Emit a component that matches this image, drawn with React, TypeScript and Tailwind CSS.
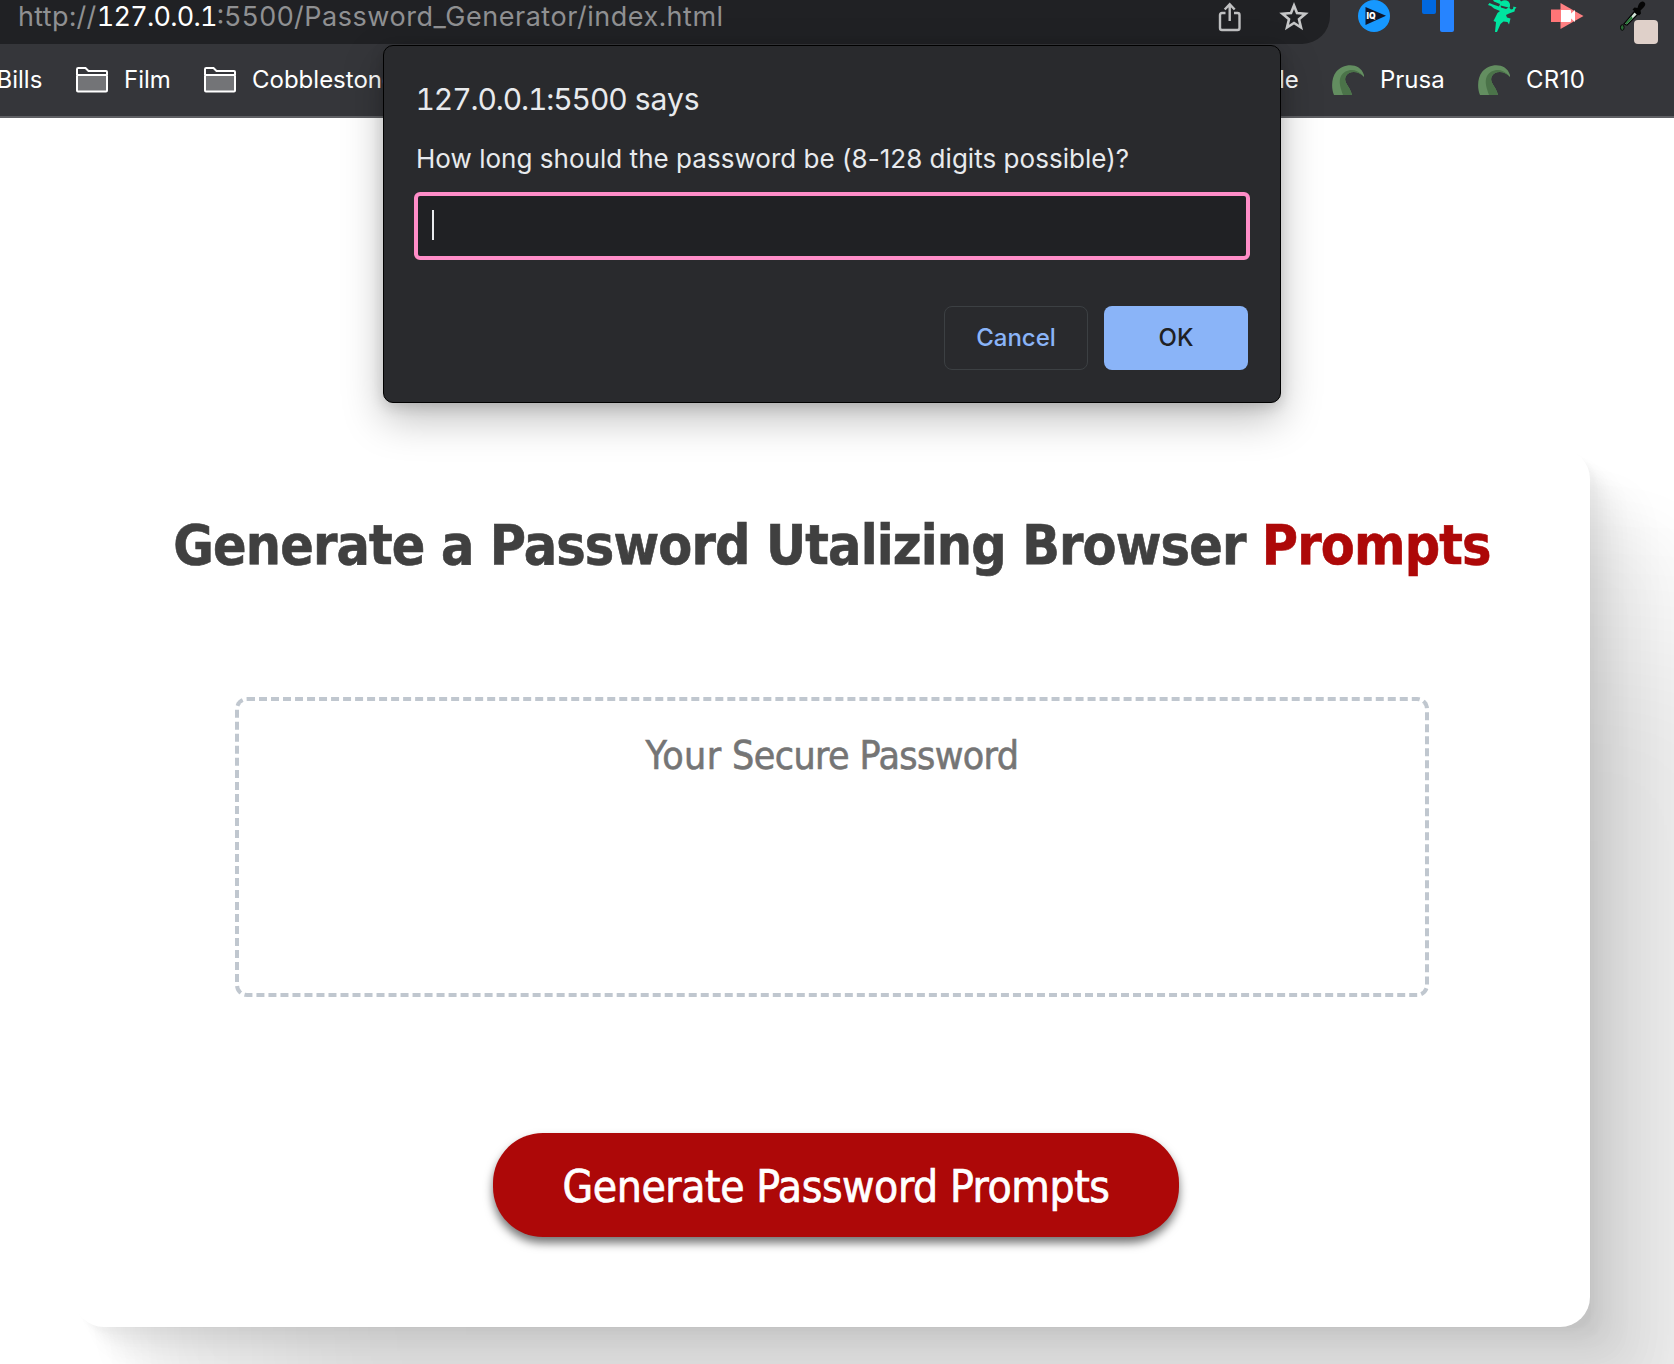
function FolderIcon() {
  return (
    <svg width="32" height="26" viewBox="0 0 32 26" fill="none" className="shrink-0">
      <path d="M1 8V2.2Q1 1 2.200 1H9.500L12.500 4H30Q31 4 31 5V8" stroke="#fff" strokeWidth="2" />
      <rect x="1" y="8" width="30" height="16.500" rx="1" fill="#737477" stroke="#fff" strokeWidth="2" />
    </svg>
  );
}

function TentacleIcon() {
  return (
    <svg width="32" height="30" viewBox="0 0 32 30" className="shrink-0">
      <path d="M2 30C-1 23 -.5 13 4 7C11-2 28-3 32 10V12C26 5 16 6 13.500 12C11.500 18 18 21 20 30Z" fill="#638e60" />
      <path d="M11 30C9 24 6 17 9 11C13 4 24 2 31 11C25 5 16 6 13.500 12C11.500 18 18 21 20 30Z" fill="#4b7349" />
    </svg>
  );
}

function ShareIcon() {
  return (
    <svg width="24" height="30" viewBox="0 0 24 30" fill="none" stroke="#c0c1c2" strokeWidth="2.400" className="shrink-0">
      <path d="M7.500 11H4Q2 11 2 13V26Q2 28 4 28H19.500Q21.500 28 21.500 26V13Q21.500 11 19.500 11H16" />
      <path d="M11.700 19V2.500M6.700 7.500L11.700 2.300L16.700 7.500" />
    </svg>
  );
}

function StarIcon() {
  return (
    <svg width="30" height="29" viewBox="0 0 30 29" className="shrink-0">
      <path
        d="M15 3.500L18 11L26.500 11.700L20 17.200L22 25.500L15 21L8 25.500L10 17.200L3.500 11.700L12 11Z"
        fill="none" stroke="#c6c7c8" strokeWidth="2.600"
      />
    </svg>
  );
}

function IqIcon() {
  return (
    <svg width="32" height="32" viewBox="0 0 32 32" className="shrink-0">
      <circle cx="16" cy="16" r="16" fill="#1698ff" />
      <path d="M7.500 7L28 15.700L7.500 25Z" fill="#10172a" />
      <text x="8.500" y="18.800" fill="#fff" fontSize="8.500" fontWeight="900" fontFamily="Inter, sans-serif">IQ</text>
    </svg>
  );
}

function BlueBarsIcon() {
  return (
    <svg width="32" height="32" viewBox="0 0 32 32" className="shrink-0">
      <rect x="0" y="-4" width="14" height="18" rx="2" fill="#0068e0" />
      <rect x="18" y="-4" width="14" height="36" rx="2" fill="#2684ff" />
    </svg>
  );
}

function NinjaIcon() {
  return (
    <svg width="30" height="32" viewBox="0 0 30 32" className="shrink-0">
      <path
        d="M5 0H12L13 1.500Q17-1 20.500 1.500Q23 4 21.500 8L23 9.500L25 9L25.500 6.500L28.500 7.500L27 9L26.500 11.500L21 13.500L18 15L19 17.500L22.500 18.500L21 24.500L19.500 22L15.500 21.500L12.500 24L9 32H7L8 22L5.500 21L8 16L9.500 13L12 11L6 8.500L3 6L0 5L1.500 3L5 4.500L11 6.500L12 4L6 1.500Z"
        fill="#00e5a0"
      />
      <path d="M12.500 5.500L20.500 7.500L18 9L13 7.500Z" fill="#35363a" />
    </svg>
  );
}

function CameraIcon() {
  return (
    <svg width="33" height="28" viewBox="0 0 33 28" className="shrink-0">
      <rect x="0" y="7.500" width="10" height="12.500" fill="#ff7577" />
      <path d="M9.500 1L32.500 14L9.500 27Z" fill="#ff8082" />
      <path d="M10 8H19Q20 8 20 9V11.500L24 8V20L20 16.500V19Q20 20 19 20H10Z" fill="#fff" />
    </svg>
  );
}

function DropperIcon() {
  return (
    <svg width="38" height="44" viewBox="0 0 38 44" className="shrink-0">
      <path d="M4 24L14.500 11.500L17.500 14.500L7 25Z" fill="#d3e3d8" stroke="#050505" strokeWidth="1.300" />
      <path d="M5 23.500L11.500 16L12.800 18.500L6.500 24.500Z" fill="#2c7a3c" />
      <ellipse cx="2.300" cy="27.500" rx="1.800" ry="2.800" fill="#2b6b36" stroke="#050505" />
      <path d="M12.500 9.500L14.500 7.500L17.500 8Q19 1 23 1.500Q27 3 24 7L20.500 10.500L21 13.500L19 15.500Z" fill="#050505" />
      <rect x="14" y="20" width="24" height="24" rx="4" fill="#dfd0c9" />
    </svg>
  );
}

export default function App() {
  return (
    <div className="relative flex h-[1364px] w-[1674px] flex-col overflow-hidden bg-white font-['Inter',sans-serif]">
      <header className="shrink-0 bg-[#35363a]">
        <div className="flex h-11">
          <div className="flex h-11 w-[1330px] items-start rounded-br-[28px] bg-[#202124] pl-[18px]">
            <div className="flex-1 whitespace-nowrap pt-px text-[27px] leading-[32px] tabular-nums text-[#8f9092]">
              <span className="tracking-[0.35px]">http://</span>
              <span className="tracking-[-0.75px] text-white">127.0.0.1</span>
              <span>:5500</span>
              <span className="tracking-[0.53px]">/Password_Generator/index.html</span>
            </div>
            <div className="mt-px flex w-[112px] gap-[37px] pt-px"><ShareIcon /><StarIcon /></div>
          </div>
          <div className="flex flex-1 items-start pl-7">
            <IqIcon />
            <div className="ml-8"><BlueBarsIcon /></div>
            <div className="ml-[34px]"><NinjaIcon /></div>
            <div className="ml-[33px] pt-0.5"><CameraIcon /></div>
            <div className="ml-9"><DropperIcon /></div>
          </div>
        </div>
        <div className="flex h-[74px] items-center border-b-2 border-[#5f6064] text-[24px] leading-[30px] text-white">
          <span className="-ml-[3.5px] w-[79.5px] whitespace-nowrap">Bills</span>
          <FolderIcon />
          <span className="ml-4 w-[80px]">Film</span>
          <FolderIcon />
          <span className="ml-4 w-[1027px] whitespace-nowrap">Cobblestone</span>
          <span className="w-[53px]">le</span>
          <TentacleIcon />
          <span className="ml-4 w-[98px]">Prusa</span>
          <TentacleIcon />
          <span className="ml-4 tracking-[0.3px]">CR10</span>
        </div>
      </header>

      <main className="pl-[74px] pt-[331px]">
        <section className="flex h-[878px] w-[1516px] flex-col items-center rounded-[30px] bg-white font-['DejaVu_Sans_Condensed','DejaVu_Sans',sans-serif] shadow-[5.6px_5.6px_4.4px_rgba(0,0,0,0.02),13.4px_13.4px_10.6px_rgba(0,0,0,0.028),25px_25px_20px_rgba(0,0,0,0.035),44.6px_44.6px_35.8px_rgba(0,0,0,0.042),83.6px_83.6px_66.8px_rgba(0,0,0,0.05),200px_200px_160px_rgba(0,0,0,0.07)]">
          <h1 className="mt-[62px] whitespace-nowrap text-[55px] font-bold leading-[68px] tracking-[-0.85px] text-[#404040] [-webkit-text-stroke:0.6px]">
            Generate a Password Utalizing Browser <span className="text-[#ad0808]">Prompts</span>
          </h1>
          <div className="mt-[118px] h-[300px] w-[1194px] rounded-xl border-4 border-dashed border-[#c0c7cf] pt-[31px] text-center text-[39px] leading-[48px] tracking-[-0.6px] text-[#757575] [-webkit-text-stroke:0.6px]">
            <span className="tracking-[0.4px]">Your</span> Secure Password
          </div>
          <button className="ml-2 mt-[136px] h-[104px] w-[686px] rounded-[50px] bg-[#ad0808] pt-[3px] text-[44px] leading-[54px] tracking-[-0.4px] text-white shadow-[0_6px_10px_rgba(0,0,0,0.55)] [-webkit-text-stroke:0.7px]">
            Generate Password Prompts
          </button>
        </section>
      </main>

      <div className="absolute left-[383px] top-[45px] flex h-[358px] w-[898px] flex-col rounded-[10px] border border-black bg-[#292a2d] px-[30px] text-[#e8eaed] shadow-[0_16px_40px_rgba(0,0,0,0.25),0_4px_14px_rgba(0,0,0,0.15)]">
        <h2 className="mt-[33px] whitespace-nowrap pl-[1.5px] text-[30px] leading-[40px] tabular-nums">
          <span className="tracking-[-1.12px]">127.0.0.1:5500</span> says
        </h2>
        <p className="mt-[23px] whitespace-nowrap pl-[2px] text-[26px] leading-[34px] tracking-[0.03px]">
          How long should the password be (8-128 digits possible)?
        </p>
        <div className="mt-4 flex h-[68px] w-[836px] items-center rounded-md border-4 border-[#ff8dc8] bg-[#202124] pb-0.5 pl-[14px]">
          <span className="h-[30px] w-[2px] bg-[#e8eaed]" />
        </div>
        <div className="mt-[46px] flex justify-end gap-4 pr-0.5 text-[24px] font-medium">
          <button className="h-16 w-36 rounded-lg border border-[#3c4043] text-[#8ab4f8]">Cancel</button>
          <button className="h-16 w-36 rounded-lg bg-[#8ab4f8] text-[#202124]">OK</button>
        </div>
      </div>
    </div>
  );
}
